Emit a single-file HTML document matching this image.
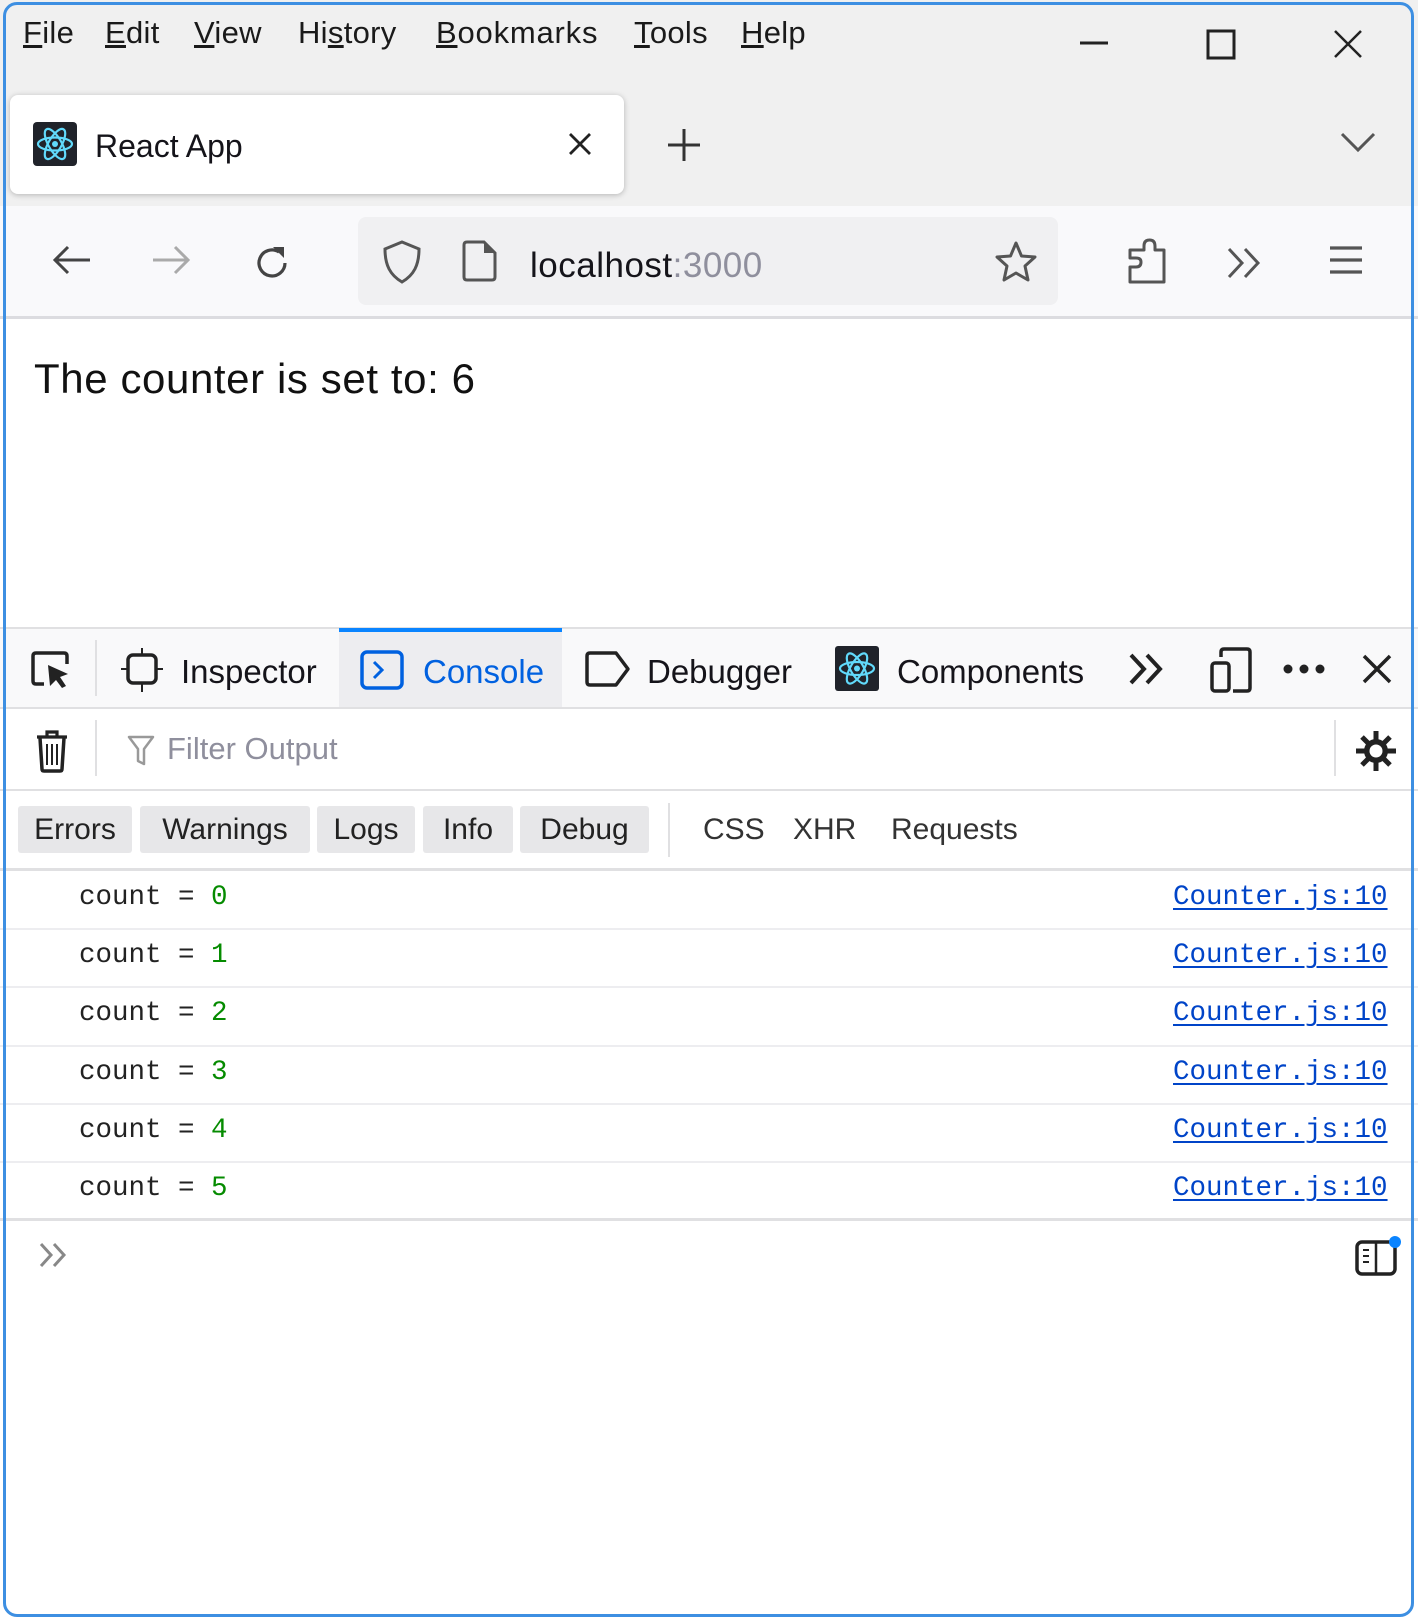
<!DOCTYPE html>
<html><head><meta charset="utf-8"><style>
*{margin:0;padding:0;box-sizing:border-box}
body{width:1418px;height:1620px;background:#fff;position:relative;overflow:hidden;font-family:"Liberation Sans",sans-serif;color:#15141a}
.a{position:absolute;white-space:nowrap}
.t{line-height:1}
svg{position:absolute;overflow:visible}
.mono{font-family:"Liberation Mono",monospace;font-size:27.5px;color:#222}
.g{color:#058b00}
.lnk{color:#0044c8;text-decoration:underline;text-decoration-thickness:2px;text-underline-offset:4px}
.btn{position:absolute;top:806px;height:47px;background:#e7e7e9;border-radius:3px;font-size:30px;line-height:47px;text-align:center;color:#222}
.sep{position:absolute;background:#e0e0e2}
</style></head><body>
<div class="a" style="left:0;top:0;width:1418px;height:206px;background:#f0f0f0"></div>
<div class="a" style="left:0;top:206px;width:1418px;height:112px;background:#f9f9fb"></div>
<div class="a" style="left:0;top:316px;width:1418px;height:3px;background:#dcdce0"></div>
<div class="a t" style="top:17px;left:23px;font-size:31px;color:#1a1a1a;letter-spacing:0.3px">
<span style="position:absolute;left:0"><u>F</u>ile</span>
<span style="position:absolute;left:82px"><u>E</u>dit</span>
<span style="position:absolute;left:171px"><u>V</u>iew</span>
<span style="position:absolute;left:275px">Hi<u>s</u>tory</span>
<span style="position:absolute;left:413px;letter-spacing:0.8px"><u>B</u>ookmarks</span>
<span style="position:absolute;left:611px"><u>T</u>ools</span>
<span style="position:absolute;left:718px"><u>H</u>elp</span>
</div>
<svg style="left:1078px;top:28px" width="32" height="32"><path d="M2 15H30" stroke="#222" stroke-width="3"/></svg>
<svg style="left:1206px;top:29px" width="30" height="30"><rect x="2" y="2" width="26" height="27" fill="none" stroke="#222" stroke-width="3"/></svg>
<svg style="left:1333px;top:29px" width="30" height="30"><path d="M2 2L28 28M28 2L2 28" stroke="#222" stroke-width="2.5"/></svg>
<div class="a" style="left:10px;top:95px;width:614px;height:99px;background:#fff;border-radius:8px;box-shadow:0 1px 6px rgba(0,0,0,.25)"></div>
<div class="a" style="left:33px;top:122px;width:44px;height:44px;background:#20232a;border-radius:4px"></div>
<svg style="left:33px;top:122px" width="44" height="44"><g fill="none" stroke="#61dafb" stroke-width="2.2"><ellipse cx="22" cy="22" rx="17" ry="6.5"/><ellipse cx="22" cy="22" rx="17" ry="6.5" transform="rotate(60 22 22)"/><ellipse cx="22" cy="22" rx="17" ry="6.5" transform="rotate(120 22 22)"/></g><circle cx="22" cy="22" r="3" fill="#61dafb"/></svg>
<div class="a t" style="left:95px;top:130px;font-size:32px;color:#15141a">React App</div>
<svg style="left:568px;top:132px" width="24" height="24"><path d="M2 2L22 22M22 2L2 22" stroke="#222" stroke-width="2.8"/></svg>
<svg style="left:667px;top:128px" width="34" height="34"><path d="M17 1V33M1 17H33" stroke="#333" stroke-width="3"/></svg>
<svg style="left:1340px;top:131px" width="36" height="22"><path d="M2 3L18 19L34 3" fill="none" stroke="#555" stroke-width="3"/></svg>
<svg style="left:52px;top:245px" width="40" height="30"><path d="M38 15H4M16 2L3 15L16 28" fill="none" stroke="#444" stroke-width="3"/></svg>
<svg style="left:151px;top:245px" width="40" height="30"><path d="M2 15H36M24 2L37 15L24 28" fill="none" stroke="#aaa" stroke-width="3"/></svg>
<svg style="left:252px;top:243px" width="40" height="40"><path d="M33 20A13 13 0 1 1 27 9" fill="none" stroke="#444" stroke-width="3.2"/><path d="M21 4L32 4L32 15Z" fill="#444"/></svg>
<div class="a" style="left:358px;top:217px;width:700px;height:88px;background:#f0f0f2;border-radius:8px"></div>
<svg style="left:382px;top:239px" width="44" height="46"><path d="M20 3L37 10C37 26 32 36 20 43C8 36 3 26 3 10Z" fill="none" stroke="#555" stroke-width="3"/></svg>
<svg style="left:462px;top:240px" width="36" height="42"><path d="M5 2H22L33 13V37Q33 40 30 40H5Q2 40 2 37V5Q2 2 5 2Z" fill="none" stroke="#555" stroke-width="3"/><path d="M22 2V13H33Z" fill="#555"/></svg>
<div class="a t" style="left:530px;top:248px;font-size:35px;color:#15141a;letter-spacing:0.5px">localhost<span style="color:#8f8f9d">:3000</span></div>
<svg style="left:993px;top:240px" width="46" height="44"><path d="M23 3L28.5 16L42 17L32 26L35 40L23 33L11 40L14 26L4 17L17.5 16Z" fill="none" stroke="#555" stroke-width="3" stroke-linejoin="round"/></svg>
<svg style="left:1127px;top:238px" width="40" height="46"><path d="M3 44V29H9Q14 29 14 24Q14 20 9 20H3V12H17V8Q17 2 22.5 2Q28 2 28 8V12H37V44Z" fill="none" stroke="#555" stroke-width="3" stroke-linejoin="round"/></svg>
<svg style="left:1226px;top:246px" width="38" height="34"><path d="M3 3L16 17L3 31M19 3L32 17L19 31" fill="none" stroke="#555" stroke-width="3"/></svg>
<svg style="left:1328px;top:245px" width="36" height="30"><path d="M2 3H34M2 15H34M2 27H34" stroke="#555" stroke-width="3.2"/></svg>
<div class="a t" style="left:34px;top:358px;font-size:42px;color:#111;letter-spacing:0.6px">The counter is set to: 6</div>
<div class="a" style="left:0;top:627px;width:1418px;height:2px;background:#e0e0e2"></div>
<div class="a" style="left:0;top:629px;width:1418px;height:79px;background:#f9f9fa"></div>
<div class="a" style="left:0;top:707px;width:1418px;height:2px;background:#e0e0e2"></div>
<div class="a" style="left:339px;top:629px;width:223px;height:78px;background:#ededf0"></div>
<div class="a" style="left:339px;top:628px;width:223px;height:4px;background:#0a84ff"></div>
<svg style="left:30px;top:650px" width="42" height="40"><path d="M14 34H6Q3 34 3 31V6Q3 3 6 3H34Q37 3 37 6V14" fill="none" stroke="#222" stroke-width="3.5"/><path d="M18 15L38 24L30 27L36 36L32 38L26 30L20 36Z" fill="#222"/></svg>
<div class="sep" style="left:95px;top:640px;width:2px;height:56px"></div>
<svg style="left:121px;top:648px" width="42" height="44"><rect x="7" y="7" width="28" height="28" rx="5" fill="none" stroke="#222" stroke-width="3.5"/><path d="M21 0V7M21 35V44M0 21H7M35 21H42" stroke="#222" stroke-width="2"/></svg>
<div class="a t" style="left:181px;top:655px;font-size:33px">Inspector</div>
<svg style="left:360px;top:650px" width="44" height="40"><rect x="2" y="2" width="40" height="36" rx="5" fill="none" stroke="#0061e0" stroke-width="3.5"/><path d="M14 12L22 20L14 28" fill="none" stroke="#0061e0" stroke-width="3"/></svg>
<div class="a t" style="left:423px;top:655px;font-size:33px;color:#0061e0">Console</div>
<svg style="left:585px;top:651px" width="46" height="36"><path d="M5 2H31L43 18L31 34H5Q2 34 2 31V5Q2 2 5 2Z" fill="none" stroke="#222" stroke-width="3.5" stroke-linejoin="round"/></svg>
<div class="a t" style="left:647px;top:655px;font-size:33px">Debugger</div>
<div class="a" style="left:835px;top:646px;width:44px;height:45px;background:#20232a;border-radius:3px"></div>
<svg style="left:835px;top:646px" width="44" height="45"><g fill="none" stroke="#61dafb" stroke-width="2.2"><ellipse cx="22" cy="22.5" rx="17" ry="6.5"/><ellipse cx="22" cy="22.5" rx="17" ry="6.5" transform="rotate(60 22 22.5)"/><ellipse cx="22" cy="22.5" rx="17" ry="6.5" transform="rotate(120 22 22.5)"/></g><circle cx="22" cy="22.5" r="3" fill="#61dafb"/></svg>
<div class="a t" style="left:897px;top:655px;font-size:33px">Components</div>
<svg style="left:1128px;top:652px" width="38" height="34"><path d="M3 3L16 17L3 31M19 3L32 17L19 31" fill="none" stroke="#222" stroke-width="4"/></svg>
<svg style="left:1209px;top:647px" width="44" height="46"><path d="M12 10V5Q12 2 15 2H38Q41 2 41 5V41Q41 44 38 44H24" fill="none" stroke="#222" stroke-width="3.5"/><rect x="3" y="16" width="17" height="28" rx="3" fill="none" stroke="#222" stroke-width="3.5"/></svg>
<svg style="left:1282px;top:663px" width="44" height="12"><circle cx="6" cy="6" r="4.5" fill="#222"/><circle cx="22" cy="6" r="4.5" fill="#222"/><circle cx="38" cy="6" r="4.5" fill="#222"/></svg>
<svg style="left:1362px;top:654px" width="30" height="30"><path d="M2 2L28 28M28 2L2 28" stroke="#222" stroke-width="3.5"/></svg>
<div class="a" style="left:0;top:789px;width:1418px;height:2px;background:#e0e0e2"></div>
<svg style="left:35px;top:729px" width="34" height="44"><path d="M2 8H32M12 8V3H22V8" fill="none" stroke="#222" stroke-width="3.2"/><path d="M5 9L7 40Q7 42 9 42H25Q27 42 27 40L29 9" fill="none" stroke="#222" stroke-width="3.5"/><path d="M12 15V36M17 15V36M22 15V36" stroke="#222" stroke-width="2"/></svg>
<div class="sep" style="left:95px;top:720px;width:2px;height:56px"></div>
<svg style="left:127px;top:735px" width="28" height="32"><path d="M2 2H26L17 14V29L11 26V14Z" fill="none" stroke="#999" stroke-width="2.5" stroke-linejoin="round"/></svg>
<div class="a t" style="left:167px;top:733px;font-size:31px;color:#8f8f9d">Filter Output</div>
<div class="sep" style="left:1334px;top:720px;width:2px;height:56px"></div>
<svg style="left:1354px;top:729px" width="44" height="44"><g stroke="#222" stroke-width="5" stroke-linecap="butt"><path d="M22 2V42M2 22H42M8 8L36 36M36 8L8 36"/></g><circle cx="22" cy="22" r="12" fill="#222"/><circle cx="22" cy="22" r="6.5" fill="#fff"/></svg>
<div class="btn" style="left:18px;width:114px">Errors</div>
<div class="btn" style="left:140px;width:170px">Warnings</div>
<div class="btn" style="left:317px;width:98px">Logs</div>
<div class="btn" style="left:423px;width:90px">Info</div>
<div class="btn" style="left:520px;width:129px">Debug</div>
<div class="sep" style="left:668px;top:803px;width:2px;height:54px"></div>
<div class="a t" style="left:703px;top:815px;font-size:30px;color:#333">CSS</div>
<div class="a t" style="left:793px;top:815px;font-size:30px;color:#333">XHR</div>
<div class="a t" style="left:891px;top:815px;font-size:30px;color:#333">Requests</div>
<div class="a" style="left:0;top:868px;width:1418px;height:3px;background:#e0e0e2"></div>
<div class="a" style="left:0;top:871px;width:1418px">
<div class="a mono" style="left:79px;top:11px">count = <span class="g">0</span></div><div class="a mono lnk" style="left:1173px;top:11px">Counter.js:10</div>
<div class="sep" style="left:0;top:57px;width:1418px;height:2px;background:#ededf0"></div>
<div class="a mono" style="left:79px;top:69px">count = <span class="g">1</span></div><div class="a mono lnk" style="left:1173px;top:69px">Counter.js:10</div>
<div class="sep" style="left:0;top:115px;width:1418px;height:2px;background:#ededf0"></div>
<div class="a mono" style="left:79px;top:127px">count = <span class="g">2</span></div><div class="a mono lnk" style="left:1173px;top:127px">Counter.js:10</div>
<div class="sep" style="left:0;top:174px;width:1418px;height:2px;background:#ededf0"></div>
<div class="a mono" style="left:79px;top:186px">count = <span class="g">3</span></div><div class="a mono lnk" style="left:1173px;top:186px">Counter.js:10</div>
<div class="sep" style="left:0;top:232px;width:1418px;height:2px;background:#ededf0"></div>
<div class="a mono" style="left:79px;top:244px">count = <span class="g">4</span></div><div class="a mono lnk" style="left:1173px;top:244px">Counter.js:10</div>
<div class="sep" style="left:0;top:290px;width:1418px;height:2px;background:#ededf0"></div>
<div class="a mono" style="left:79px;top:302px">count = <span class="g">5</span></div><div class="a mono lnk" style="left:1173px;top:302px">Counter.js:10</div>
<div class="sep" style="left:0;top:347px;width:1418px;height:3px;background:#e0e0e2"></div>
</div>
<svg style="left:38px;top:1242px" width="32" height="26"><path d="M3 2L13 13L3 24M16 2L26 13L16 24" fill="none" stroke="#888" stroke-width="3"/></svg>
<svg style="left:1355px;top:1236px" width="46" height="42"><rect x="2" y="6" width="38" height="32" rx="5" fill="none" stroke="#222" stroke-width="3.5"/><path d="M21 6V38" stroke="#222" stroke-width="2.5"/><path d="M8 14H14M8 20H14M8 26H14" stroke="#222" stroke-width="2"/><circle cx="40" cy="6" r="6" fill="#0a84ff"/></svg>
<div class="a" style="left:3px;top:2px;width:1411px;height:1615px;border:3px solid #3d8fe2;border-radius:14px"></div>
</body></html>
